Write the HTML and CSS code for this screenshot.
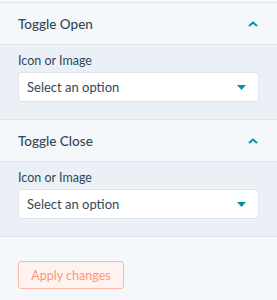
FILE: index.html
```html
<!DOCTYPE html>
<html>
<head>
<meta charset="utf-8">
<link rel="stylesheet" href="styles.css">
</head>
<body>
<div class="panel">
  <section class="group">
    <div class="group-header">
      <span class="group-title">Toggle Open</span>
      <svg class="chev" width="10" height="6" viewBox="0 0 10 6"><path d="M1 5 L5 1.5 L9 5" fill="none" stroke="#0091ae" stroke-width="2"/></svg>
    </div>
    <div class="group-body">
      <label class="field-label">Icon or Image</label>
      <div class="select">
        <span>Select an option</span>
        <svg width="9" height="5" viewBox="0 0 9 5"><path d="M0 0 H9 L4.5 5 Z" fill="#0091ae"/></svg>
      </div>
    </div>
  </section>
  <section class="group">
    <div class="group-header">
      <span class="group-title">Toggle Close</span>
      <svg class="chev" width="10" height="6" viewBox="0 0 10 6"><path d="M1 5 L5 1.5 L9 5" fill="none" stroke="#0091ae" stroke-width="2"/></svg>
    </div>
    <div class="group-body">
      <label class="field-label">Icon or Image</label>
      <div class="select">
        <span>Select an option</span>
        <svg width="9" height="5" viewBox="0 0 9 5"><path d="M0 0 H9 L4.5 5 Z" fill="#0091ae"/></svg>
      </div>
    </div>
  </section>
  <div class="footer">
    <button class="apply">Apply changes</button>
  </div>
</div>
</body>
</html>
```

FILE: styles.css
```css
html, body {
  margin: 0;
  padding: 0;
  background: #f5f8fa;
}
body {
  font-family: Lato, "Open Sans", sans-serif;
  color: #33475b;
}
.panel {
  padding-top: 2px;
}
.group {
  border-top: 1px solid #dfe3eb;
}
.group-header {
  height: 42px;
  box-sizing: border-box;
  background: #f5f8fa;
  border-bottom: 1px solid #dfe3eb;
  display: flex;
  align-items: center;
  justify-content: space-between;
  padding: 0 19px 0 18px;
}
.group-title {
  font-size: 13.5px;
  font-weight: 500;
}
.chev {
  display: block;
}
.group-body {
  background: #eaf0f6;
  padding: 8px 18px 17px 18px;
}
.field-label {
  display: block;
  font-size: 12.5px;
  line-height: 16px;
  margin-bottom: 3px;
}
.select {
  height: 28px;
  background: #fff;
  border: 1px solid #dfe3eb;
  border-radius: 3px;
  display: flex;
  align-items: center;
  justify-content: space-between;
  padding: 0 12px 0 8px;
  font-size: 13px;
}
.footer {
  border-top: 1px solid #dfe3eb;
  padding: 24px 18px 20px;
}
.apply {
  font-family: Lato, "Open Sans", sans-serif;
  width: 106px;
  height: 28px;
  background: #fff3f0;
  border: 1px solid #ffb7a5;
  border-radius: 3px;
  color: #ff9378;
  font-size: 12.5px;
  padding: 0;
}
```
